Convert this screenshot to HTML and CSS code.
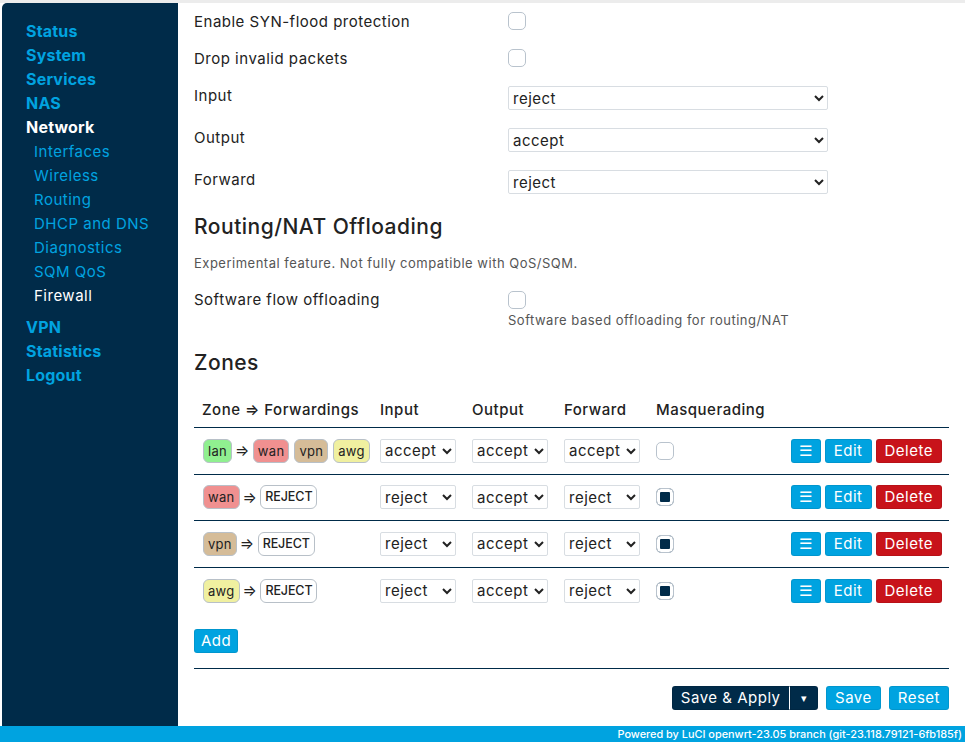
FILE: index.html
```html
<!DOCTYPE html>
<html>
<head>
<meta charset="utf-8">
<link rel="stylesheet" href="styles.css">
</head>
<body>
<div class="page">
  <nav class="sidebar">
    <ul class="menu">
      <li class="top">Status</li>
      <li class="top">System</li>
      <li class="top">Services</li>
      <li class="top">NAS</li>
      <li class="top active">Network</li>
      <li>
        <ul class="submenu">
          <li>Interfaces</li>
          <li>Wireless</li>
          <li>Routing</li>
          <li>DHCP and DNS</li>
          <li>Diagnostics</li>
          <li>SQM QoS</li>
          <li class="active">Firewall</li>
        </ul>
      </li>
      <li class="top">VPN</li>
      <li class="top">Statistics</li>
      <li class="top">Logout</li>
    </ul>
  </nav>
  <main class="content">
    <div class="form">
      <div class="row row-cb">
        <div class="label">Enable SYN-flood protection</div>
        <div class="field"><input type="checkbox" class="cb"></div>
      </div>
      <div class="row row-cb">
        <div class="label">Drop invalid packets</div>
        <div class="field"><input type="checkbox" class="cb"></div>
      </div>
      <div class="row row-sel">
        <div class="label">Input</div>
        <div class="field"><select class="sel wide"><option>reject</option></select></div>
      </div>
      <div class="row row-sel">
        <div class="label">Output</div>
        <div class="field"><select class="sel wide"><option>accept</option></select></div>
      </div>
      <div class="row row-sel">
        <div class="label">Forward</div>
        <div class="field"><select class="sel wide"><option>reject</option></select></div>
      </div>
    </div>

    <h3 class="heading h-off">Routing/NAT Offloading</h3>
    <p class="desc">Experimental feature. Not fully compatible with QoS/SQM.</p>
    <div class="row row-off">
      <div class="label">Software flow offloading</div>
      <div class="field">
        <input type="checkbox" class="cb">
        <div class="hint">Software based offloading for routing/NAT</div>
      </div>
    </div>

    <h3 class="heading h-zones">Zones</h3>
    <table class="zones">
      <thead>
        <tr>
          <th class="c-zone">Zone ⇒ Forwardings</th>
          <th class="c-sel">Input</th>
          <th class="c-sel">Output</th>
          <th class="c-sel">Forward</th>
          <th class="c-masq">Masquerading</th>
          <th></th>
        </tr>
      </thead>
      <tbody>
        <tr>
          <td class="c-zone"><span class="badge lan">lan</span><span class="arrow">⇒</span><span class="badge wan">wan</span> <span class="badge vpn">vpn</span> <span class="badge awg">awg</span></td>
          <td><select class="sel small"><option>accept</option></select></td>
          <td><select class="sel small"><option>accept</option></select></td>
          <td><select class="sel small"><option>accept</option></select></td>
          <td><input type="checkbox" class="cb"></td>
          <td class="actions"><button class="btn blue menu-btn">☰</button><button class="btn blue">Edit</button><button class="btn red">Delete</button></td>
        </tr>
        <tr>
          <td class="c-zone"><span class="badge wan">wan</span><span class="arrow">⇒</span><span class="badge rej">REJECT</span></td>
          <td><select class="sel small"><option>reject</option><option>accept</option></select></td>
          <td><select class="sel small"><option>accept</option></select></td>
          <td><select class="sel small"><option>reject</option><option>accept</option></select></td>
          <td><input type="checkbox" class="cb" checked></td>
          <td class="actions"><button class="btn blue menu-btn">☰</button><button class="btn blue">Edit</button><button class="btn red">Delete</button></td>
        </tr>
        <tr>
          <td class="c-zone"><span class="badge vpn">vpn</span><span class="arrow">⇒</span><span class="badge rej">REJECT</span></td>
          <td><select class="sel small"><option>reject</option><option>accept</option></select></td>
          <td><select class="sel small"><option>accept</option></select></td>
          <td><select class="sel small"><option>reject</option><option>accept</option></select></td>
          <td><input type="checkbox" class="cb" checked></td>
          <td class="actions"><button class="btn blue menu-btn">☰</button><button class="btn blue">Edit</button><button class="btn red">Delete</button></td>
        </tr>
        <tr>
          <td class="c-zone"><span class="badge awg">awg</span><span class="arrow">⇒</span><span class="badge rej">REJECT</span></td>
          <td><select class="sel small"><option>reject</option><option>accept</option></select></td>
          <td><select class="sel small"><option>accept</option></select></td>
          <td><select class="sel small"><option>reject</option><option>accept</option></select></td>
          <td><input type="checkbox" class="cb" checked></td>
          <td class="actions"><button class="btn blue menu-btn">☰</button><button class="btn blue">Edit</button><button class="btn red">Delete</button></td>
        </tr>
      </tbody>
    </table>
    <div class="add-wrap"><button class="btn blue add">Add</button></div>
    <div class="page-actions">
      <div class="split"><button class="btn navy apply">Save &amp; Apply</button><button class="btn navy drop">▾</button></div>
      <button class="btn blue">Save</button>
      <button class="btn blue">Reset</button>
    </div>
  </main>
</div>
<footer class="footer">Powered by LuCI openwrt-23.05 branch (git-23.118.79121-6fb185f)</footer>
</body>
</html>
```

FILE: styles.css
```css
* { box-sizing: border-box; }
html, body { margin: 0; padding: 0; }
body {
  font-family: "Inter", "Noto Sans", sans-serif;
  letter-spacing: 0.5px;
  color: #222;
  background: #fff;
  border-top: 3px solid #ececec;
  width: 965px;
  height: 742px;
  overflow: hidden;
}
.page {
  display: flex;
  height: 723px;
}
.sidebar {
  width: 176px;
  margin-left: 2px;
  background: #002b49;
  border-top-left-radius: 5px;
  flex: none;
}
.menu, .submenu { list-style: none; margin: 0; padding: 0; }
.menu { padding: 16px 0 0 24px; }
.menu .top {
  font-size: 16px;
  font-weight: 700;
  color: #00a3e0;
  line-height: 24px;
  letter-spacing: 0.2px;
}
.menu .top.active { color: #fff; }
.submenu { padding-left: 8px; margin-top: 1px; margin-bottom: 7px; }
.submenu li {
  font-size: 15px;
  color: #00a3e0;
  line-height: 24px;
}
.submenu li.active { color: #fff; }

.content {
  flex: 1;
  padding: 9px 16px 0 16px;
}
.row {
  display: grid;
  grid-template-columns: 314px 1fr;
  align-items: start;
}
.label { font-size: 15px; line-height: 20px; }
.row-cb { height: 37px; }
.row-sel { height: 42px; }

.cb {
  appearance: none;
  -webkit-appearance: none;
  width: 18px;
  height: 18px;
  margin: 0;
  border: 1px solid #b9c3cd;
  border-radius: 5px;
  background: #fff;
  display: block;
}
.cb:checked {
  background: #002b49;
  box-shadow: inset 0 0 0 3px #fff;
}
.sel {
  font-family: inherit;
  letter-spacing: 0.5px;
  font-size: 15px;
  color: #222;
  height: 24px;
  border: 1px solid #d8dde2;
  border-radius: 2px;
  background: #fff;
  padding: 0;
}
.sel.wide { width: 320px; }
.sel.small { width: 76px; }

.heading {
  font-size: 21px;
  font-weight: 500;
  margin: 0;
  line-height: 26px;
}
.h-off { margin-top: 2px; }
.desc {
  font-size: 13px;
  color: #555;
  margin: 14px 0 0 0;
  line-height: 18px;
}
.row-off { margin-top: 18px; }
.row-off .field { padding-top: 1px; }
.hint {
  font-size: 13px;
  color: #555;
  margin-top: 2px;
  line-height: 18px;
}
.h-zones { margin-top: 21px; }

.zones {
  width: 755px;
  border-collapse: collapse;
  margin-top: 24px;
}
.zones th {
  font-size: 15px;
  font-weight: 500;
  text-align: left;
  padding: 0 0 7px 0;
  line-height: 20px;
  border-bottom: 1px solid #002b49;
}
.zones th.c-zone { padding-left: 8px; width: 186px; }
.zones th.c-sel { width: 92px; }
.zones th.c-masq { width: 120px; }
.zones td {
  height: 46.5px;
  padding: 0;
  vertical-align: middle;
  border-bottom: 1px solid #002b49;
}
.zones tbody tr:last-child td { border-bottom: none; }
.zones td.c-zone { padding-left: 9px; white-space: nowrap; }
.badge {
  display: inline-block;
  font-size: 13px;
  line-height: 22px;
  height: 24px;
  padding: 0 4px;
  border: 1px solid #b8c0c8;
  border-radius: 6px;
  color: #222;
  vertical-align: middle;
  letter-spacing: 0.3px;
}
.badge.lan { background: #90f090; }
.badge.wan { background: #f09090; }
.badge.vpn { background: #d5bc98; }
.badge.awg { background: #f0f0a0; }
.badge.rej { background: #fff; font-weight: 500; font-size: 12.5px; letter-spacing: -0.1px; }
.arrow { font-size: 15px; margin: 0 3px; vertical-align: middle; }

.actions { text-align: right; white-space: nowrap; padding-right: 7px !important; }
.btn {
  font-family: inherit;
  letter-spacing: 0.5px;
  font-size: 15px;
  color: #fff;
  border: 1px solid rgba(0,0,0,0.08);
  border-radius: 3px;
  height: 24px;
  padding: 0 8px;
  line-height: 20px;
  cursor: pointer;
}
.actions .btn { margin-left: 4px; }
.actions .menu-btn { padding: 0 7px; }
.btn.blue { background: #00a3e0; }
.btn.red { background: #c8131a; }
.btn.navy { background: #002b49; }
.add-wrap { margin-top: 15px; padding-bottom: 15px; border-bottom: 1px solid #002b49; width: 755px; }
.add { padding: 0 6px; }
.page-actions {
  display: flex;
  justify-content: flex-end;
  gap: 8px;
  margin-top: 17px;
  width: 755px;
}
.split { display: flex; }
.split .apply { border-radius: 3px 0 0 3px; border-right: 1px solid #fff; }
.split .drop { border-radius: 0 3px 3px 0; font-size: 11px; padding: 0 10px; }
.footer {
  height: 16px;
  background: #00a3e0;
  color: #fff;
  font-size: 10.9px;
  font-weight: 500;
  line-height: 16px;
  text-align: right;
  padding-right: 3px;
  letter-spacing: 0;
}
```
